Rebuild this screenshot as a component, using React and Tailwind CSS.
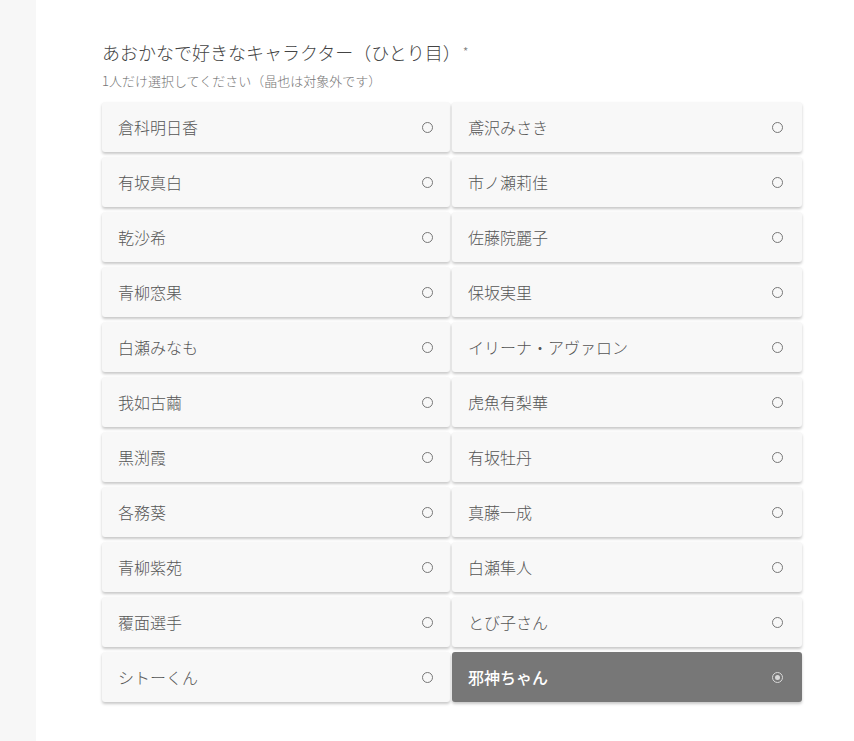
import React from "react";

const left = [
  "倉科明日香",
  "有坂真白",
  "乾沙希",
  "青柳窓果",
  "白瀬みなも",
  "我如古繭",
  "黒渕霞",
  "各務葵",
  "青柳紫苑",
  "覆面選手",
  "シトーくん",
];

const right = [
  "鳶沢みさき",
  "市ノ瀬莉佳",
  "佐藤院麗子",
  "保坂実里",
  "イリーナ・アヴァロン",
  "虎魚有梨華",
  "有坂牡丹",
  "真藤一成",
  "白瀬隼人",
  "とび子さん",
  "邪神ちゃん",
];

// Single choice card
const Choice = ({ label, selected, wide }) => {
  return (
    <div
      className={`h-[50px] flex items-center justify-between pl-4 ${wide ? "pr-[19px]" : "pr-[17px]"} rounded-[3px] shadow-[0_2px_3px_rgba(0,0,0,0.22)] ${
        selected ? "bg-[#777777] text-white" : "bg-[#f8f8f8] text-[#555555]"
      }`}
    >
      <span className={`text-[16px] ${selected ? "font-medium" : "font-light"}`}>{label}</span>
      {selected ? (
        <span className="w-[11px] h-[11px] rounded-full border border-[#d8d8d8] flex items-center justify-center">
          <span className="w-[5px] h-[5px] rounded-full bg-[#d8d8d8]"></span>
        </span>
      ) : (
        <span className="w-[11px] h-[11px] rounded-full border border-[#777777]"></span>
      )}
    </div>
  );
};

export default function App() {
  const rows = left.map((l, i) => [l, right[i]]);
  return (
    <div
      className="flex min-h-[741px] bg-white"
      style={{ fontFamily: '"Noto Sans CJK JP", "Noto Sans", sans-serif' }}
    >
      {/* Side strip */}
      <div className="w-9 shrink-0 bg-[#f7f7f7]"></div>

      {/* Question */}
      <div className="pl-[66px] pt-[38px]">
        <h2 className="text-[18px] leading-[28px] text-[#444444] font-light">
          あおかなで好きなキャラクター（ひとり目）
          <span className="ml-[2px] text-[13px] align-top text-[#777777]">*</span>
        </h2>
        <p className="mt-[5px] text-[13px] leading-[20px] text-[#777777] font-light">
          1人だけ選択してください（晶也は対象外です）
        </p>
        <div className="mt-[11px] w-[700px] grid grid-cols-[348px_350px] gap-x-[2px] gap-y-[5px]">
          {rows.map(([l, r]) => (
            <React.Fragment key={l}>
              <Choice label={l} />
              <Choice label={r} wide selected={r === "邪神ちゃん"} />
            </React.Fragment>
          ))}
        </div>
      </div>
    </div>
  );
}
